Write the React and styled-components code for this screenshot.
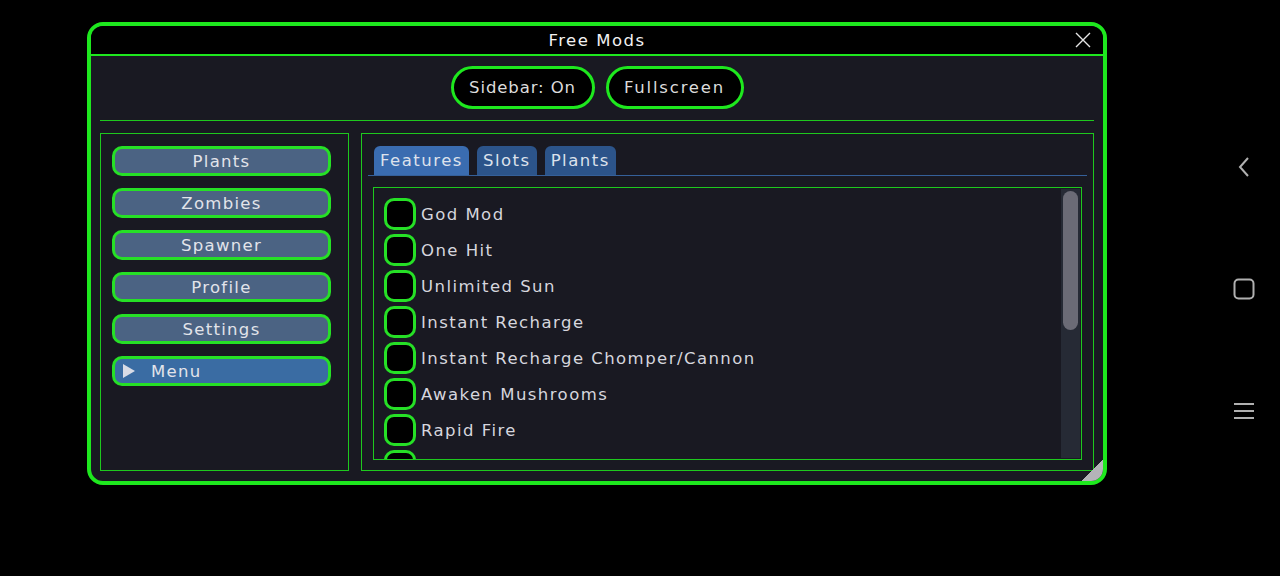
import React from "react";
import styled, { createGlobalStyle } from "styled-components";

const Global = createGlobalStyle`
  html, body { margin: 0; padding: 0; background: #000; }
  body { font-family: "DejaVu Sans", "Liberation Sans", sans-serif; }
  * { box-sizing: border-box; }
`;

const Screen = styled.div`
  width: 1280px;
  height: 576px;
  background: #000;
  display: flex;
  align-items: flex-start;
  padding: 22px 0 0 87px;
`;

const Window = styled.div`
  position: relative;
  width: 1020px;
  height: 463px;
  border: 4px solid #1ee81e;
  border-radius: 16px;
  background: #191922;
  overflow: hidden;
  display: flex;
  flex-direction: column;
`;

const TitleBar = styled.div`
  height: 30px;
  flex: none;
  background: #000;
  border-bottom: 2px solid #1ee81e;
  display: flex;
  align-items: center;
  justify-content: center;
  position: relative;
  color: #f2f2f2;
  font-size: 16.5px;
  letter-spacing: 1.5px;
  padding-top: 1px;
`;

const Close = styled.button`
  position: absolute;
  right: 10px;
  top: 4px;
  width: 20px;
  height: 20px;
  padding: 0;
  border: none;
  background: transparent;
  display: flex;
  align-items: center;
  justify-content: center;
`;

const Body = styled.div`
  flex: 1;
  display: flex;
  flex-direction: column;
  padding: 10px 9px 10px 9px;
  min-height: 0;
`;

const TopRow = styled.div`
  display: flex;
  justify-content: center;
  gap: 11px;
`;

const Pill = styled.button`
  height: 43px;
  padding: 0;
  border: 3px solid #1ee81e;
  border-radius: 22px;
  background: #000;
  color: #dcdcdc;
  font-family: inherit;
  font-size: 16.5px;
  letter-spacing: ${(p) => p.ls}px;
  width: ${(p) => p.w}px;
`;

const Separator = styled.div`
  height: 1px;
  background: #1ec81e;
  margin: 11px 0 12px;
`;

const Panels = styled.div`
  flex: 1;
  display: flex;
  gap: 12px;
  min-height: 0;
`;

const Sidebar = styled.div`
  width: 249px;
  border: 1px solid #1ec81e;
  padding: 12px 18px 12px 11px;
  display: flex;
  flex-direction: column;
  gap: 12px;
`;

const SideButton = styled.button`
  height: 30px;
  width: 219px;
  flex: none;
  border: 3px solid #26e026;
  border-radius: 10px;
  background: ${(p) => (p.active ? "#3a6ca3" : "#4b6383")};
  color: #e2e4ea;
  font-family: inherit;
  font-size: 16.5px;
  letter-spacing: 1.3px;
  display: flex;
  align-items: center;
  justify-content: ${(p) => (p.active ? "flex-start" : "center")};
  padding: ${(p) => (p.active ? "0 0 0 8px" : "0")};
  gap: 16px;
`;

const Triangle = styled.span`
  width: 0;
  height: 0;
  border-top: 7px solid transparent;
  border-bottom: 7px solid transparent;
  border-left: 12px solid #d8dce6;
`;

const Main = styled.div`
  flex: 1;
  border: 1px solid #1ec81e;
  padding: 12px 11px 10px 11px;
  display: flex;
  flex-direction: column;
  min-height: 0;
`;

const TabBar = styled.div`
  display: flex;
  gap: 8px;
  margin: 0 -5px;
  padding: 0 6px;
  border-bottom: 1.5px solid #35609a;
`;

const Tab = styled.div`
  height: 29px;
  padding: 0 6px;
  border-radius: 6px 6px 0 0;
  background: ${(p) => (p.active ? "#3a6cb0" : "#2c548a")};
  color: #dde2ec;
  font-size: 16.5px;
  letter-spacing: 1.5px;
  display: flex;
  align-items: center;
`;

const List = styled.div`
  flex: 1;
  margin-top: 11px;
  border: 1px solid #1ec81e;
  display: flex;
  min-height: 0;
`;

const Items = styled.div`
  flex: 1;
  overflow: hidden;
  padding: 10px 0 10px 10px;
  display: flex;
  flex-direction: column;
  gap: 4px;
`;

const Track = styled.div`
  width: 19px;
  margin: 1px 1px 1px 0;
  background: #262a35;
  padding: 2px;
`;

const Thumb = styled.div`
  height: 139px;
  width: 15px;
  border-radius: 8px;
  background: #6b6b76;
`;

const Row = styled.label`
  display: flex;
  align-items: center;
  gap: 5px;
  flex: none;
  color: #d6d6de;
  font-size: 16.5px;
  letter-spacing: 1.45px;
  white-space: nowrap;
`;

const Check = styled.span`
  width: 32px;
  height: 32px;
  flex: none;
  border: 3px solid #26e026;
  border-radius: 10px;
  background: #000;
`;

const Grip = styled.div`
  position: absolute;
  right: 0;
  bottom: 0;
  width: 22px;
  height: 22px;
  background: linear-gradient(135deg, transparent 50%, #b4b4b8 50%);
`;

const Nav = styled.div`
  margin-left: auto;
  margin-right: 12px;
  width: 48px;
  display: flex;
  flex-direction: column;
  align-items: center;
  gap: 98px;
  padding-top: 133px;
`;

const NavIcon = styled.svg`
  width: 24px;
  height: 24px;
  display: block;
`;

const features = [
  "God Mod",
  "One Hit",
  "Unlimited Sun",
  "Instant Recharge",
  "Instant Recharge Chomper/Cannon",
  "Awaken Mushrooms",
  "Rapid Fire",
  "Plant Anywhere",
];

const sideItems = ["Plants", "Zombies", "Spawner", "Profile", "Settings"];

export default function App() {
  return (
    <>
      <Global />
      <Screen>
        <Window>
          <TitleBar>
            Free Mods
            <Close aria-label="close">
              <svg width="16" height="16" viewBox="0 0 16 16">
                <path d="M1 1 L15 15 M15 1 L1 15" stroke="#e6e6e6" strokeWidth="1.4" />
              </svg>
            </Close>
          </TitleBar>
          <Body>
            <TopRow>
              <Pill w={144} ls={0.9}>Sidebar: On</Pill>
              <Pill w={138} ls={1.8}>Fullscreen</Pill>
            </TopRow>
            <Separator />
            <Panels>
              <Sidebar>
                {sideItems.map((s) => (
                  <SideButton key={s}>{s}</SideButton>
                ))}
                <SideButton active>
                  <Triangle />
                  Menu
                </SideButton>
              </Sidebar>
              <Main>
                <TabBar>
                  <Tab active>Features</Tab>
                  <Tab>Slots</Tab>
                  <Tab>Plants</Tab>
                </TabBar>
                <List>
                  <Items>
                    {features.map((f) => (
                      <Row key={f}>
                        <Check />
                        {f}
                      </Row>
                    ))}
                  </Items>
                  <Track>
                    <Thumb />
                  </Track>
                </List>
              </Main>
            </Panels>
          </Body>
          <Grip />
        </Window>
        <Nav>
          <NavIcon viewBox="0 0 24 24">
            <path d="M16 3 L8 12 L16 21" fill="none" stroke="#b0b0b0" strokeWidth="2" />
          </NavIcon>
          <NavIcon viewBox="0 0 24 24">
            <rect x="2.5" y="2.5" width="19" height="19" rx="4" fill="none" stroke="#b0b0b0" strokeWidth="2" />
          </NavIcon>
          <NavIcon viewBox="0 0 24 24">
            <path d="M2 5 H22 M2 12 H22 M2 19 H22" stroke="#b0b0b0" strokeWidth="2.2" />
          </NavIcon>
        </Nav>
      </Screen>
    </>
  );
}
